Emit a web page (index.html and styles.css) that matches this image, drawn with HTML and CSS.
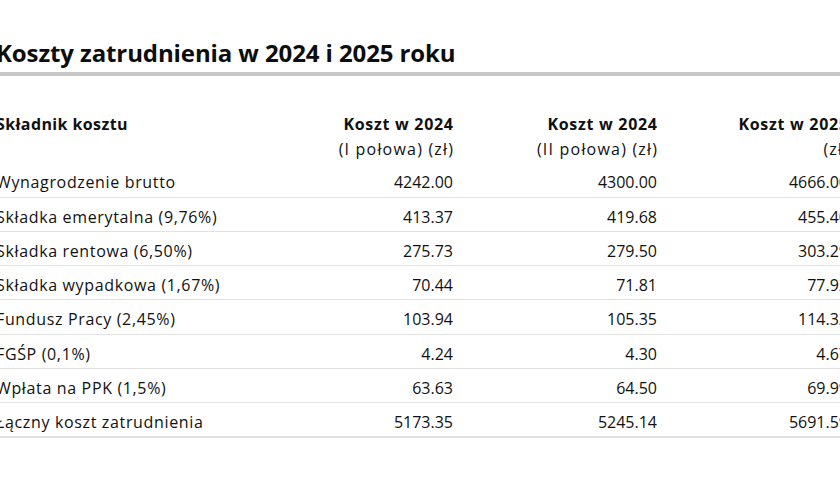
FILE: index.html
```html
<!DOCTYPE html>
<html lang="pl">
<head>
<meta charset="utf-8">
<link rel="stylesheet" href="styles.css">
</head>
<body>
<div class="page">
  <h1 class="title">Koszty zatrudnienia w 2024 i 2025 roku</h1>
  <div class="rule"></div>
  <table class="costs">
    <colgroup>
      <col class="c-name"><col class="c-num"><col class="c-num"><col class="c-last">
    </colgroup>
    <thead>
      <tr>
        <th class="name"><b>Składnik kosztu</b></th>
        <th class="num"><b>Koszt w 2024</b><br><span class="sub">(I połowa) (zł)</span></th>
        <th class="num"><b>Koszt w 2024</b><br><span class="sub">(II połowa) (zł)</span></th>
        <th class="num"><b>Koszt w 2025</b><br><span class="sub">(zł)</span></th>
      </tr>
    </thead>
    <tbody>
      <tr><td>Wynagrodzenie brutto</td><td class="num">4242.00</td><td class="num">4300.00</td><td class="num">4666.00</td></tr>
      <tr><td>Składka emerytalna (9,76%)</td><td class="num">413.37</td><td class="num">419.68</td><td class="num">455.40</td></tr>
      <tr><td>Składka rentowa (6,50%)</td><td class="num">275.73</td><td class="num">279.50</td><td class="num">303.29</td></tr>
      <tr><td>Składka wypadkowa (1,67%)</td><td class="num">70.44</td><td class="num">71.81</td><td class="num">77.92</td></tr>
      <tr><td>Fundusz Pracy (2,45%)</td><td class="num">103.94</td><td class="num">105.35</td><td class="num">114.32</td></tr>
      <tr><td>FGŚP (0,1%)</td><td class="num">4.24</td><td class="num">4.30</td><td class="num">4.67</td></tr>
      <tr><td>Wpłata na PPK (1,5%)</td><td class="num">63.63</td><td class="num">64.50</td><td class="num">69.99</td></tr>
      <tr class="last"><td>Łączny koszt zatrudnienia</td><td class="num">5173.35</td><td class="num">5245.14</td><td class="num">5691.59</td></tr>
    </tbody>
  </table>
</div>
</body>
</html>
```

FILE: styles.css
```css
html, body {
  margin: 0;
  padding: 0;
  background: #ffffff;
  overflow: hidden;
}
body {
  font-family: "Open Sans", "DejaVu Sans", sans-serif;
  color: #111111;
}
.page {
  margin-left: -4px;
  width: 1000px;
}
.title {
  margin: 0;
  padding-top: 38px;
  font-size: 24px;
  line-height: 30px;
  font-weight: 700;
  letter-spacing: -0.1px;
  color: #0d0d0d;
  height: 34px;
}
.rule {
  height: 4px;
  background: #c8c8c8;
}
.costs {
  margin-top: 33px;
  border-collapse: collapse;
  table-layout: fixed;
  width: 852px;
  font-size: 16px;
}
.c-name { width: 253px; }
.c-num { width: 204px; }
.c-last { width: 191px; }
.costs th {
  padding: 3px 0 1.3px 0;
  line-height: 25px;
  font-weight: 400;
  vertical-align: top;
}
.costs th b {
  font-weight: 700;
  letter-spacing: 0.7px;
  margin-right: -0.7px;
}
.costs th .sub {
  letter-spacing: 1.2px;
  margin-right: -1.2px;
}
.costs th.name { text-align: left; }
.costs th.name b {
  letter-spacing: 0.4px;
}
.costs td {
  padding: 6px 0 0.25px 0;
  line-height: 27px;
  border-bottom: 1px solid #e2e2e2;
  white-space: nowrap;
  letter-spacing: 0.65px;
}
.costs td.num {
  text-align: right;
  letter-spacing: 0;
}
.costs .num { text-align: right; }
.costs tr.last td { border-bottom: 2px solid #e0e0e0; }
```
